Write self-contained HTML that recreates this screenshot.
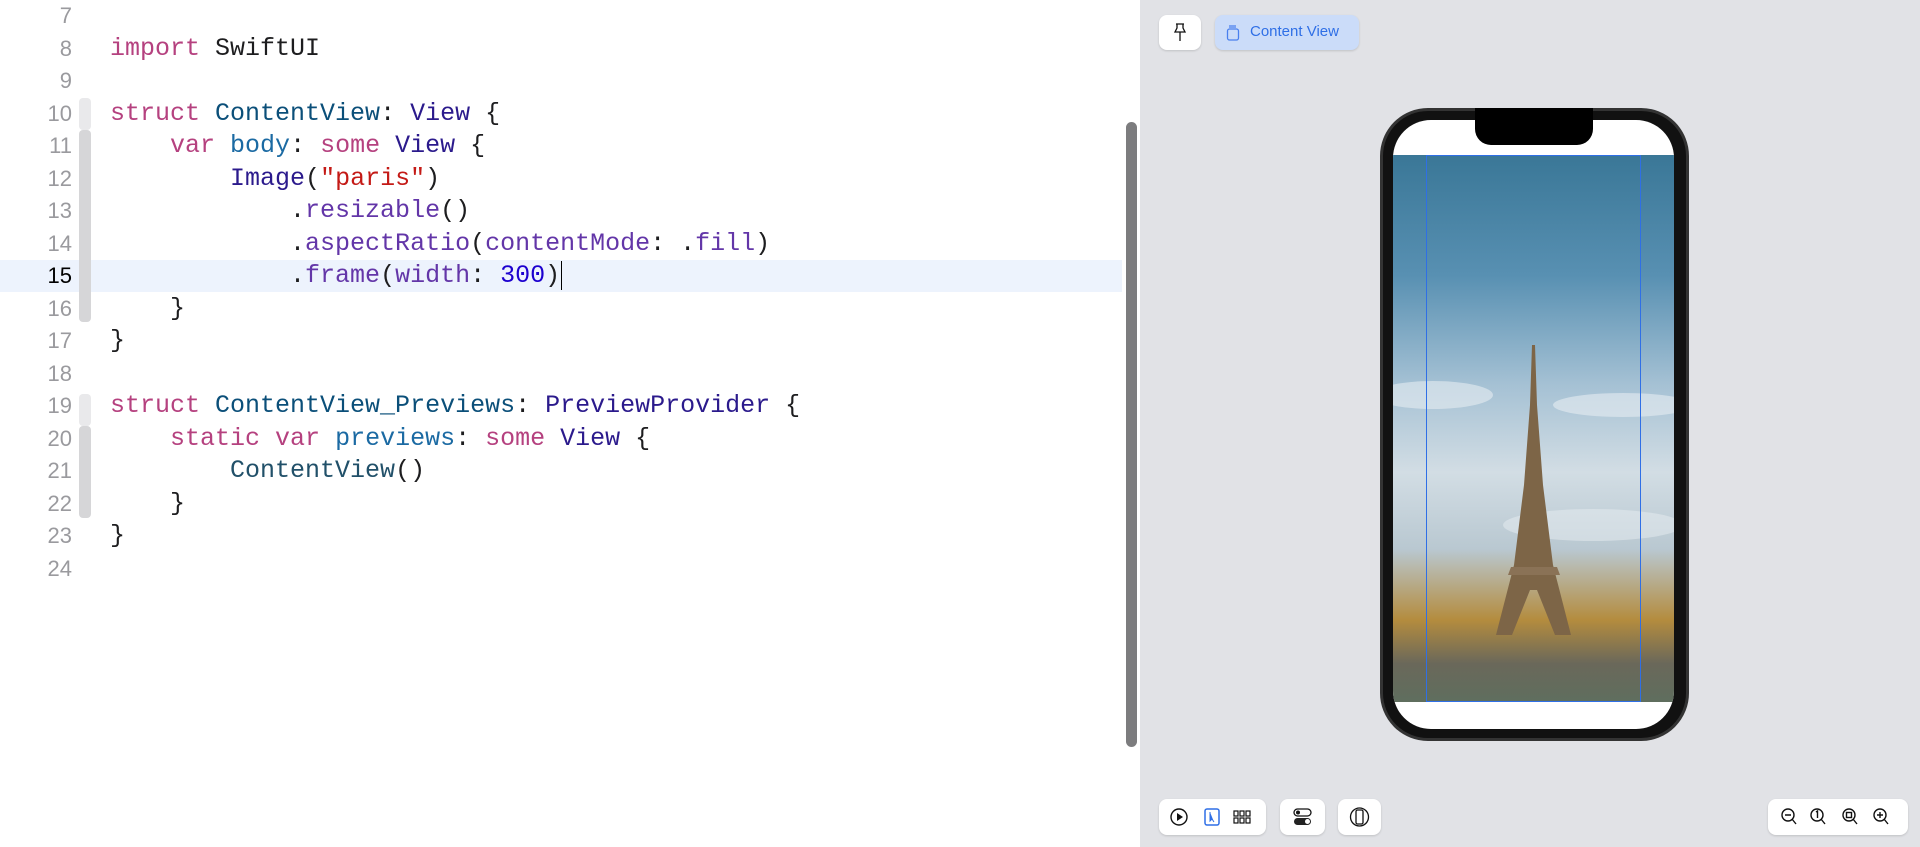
<!DOCTYPE html>
<html><head><meta charset="utf-8"><style>
*{margin:0;padding:0;box-sizing:border-box}
body{width:1920px;height:847px;overflow:hidden;background:#fff;position:relative;font-family:"Liberation Sans",sans-serif}
#ed{position:absolute;left:0;top:0;width:1139px;height:847px;background:#fff}
.hl{position:absolute;left:0;top:260px;width:1122px;height:32px;background:#edf3fd}
.ln{position:absolute;left:0;width:72px;text-align:right;font-family:"Liberation Sans",sans-serif;font-size:22px;color:#9a9a9e;line-height:32.5px}
.cd{position:absolute;left:110px;font-family:"Liberation Mono",monospace;font-size:25px;line-height:32.5px;white-space:pre;color:#1d1d1f}
.k{color:#b5417f}.t{color:#0b4f79}.v{color:#2b1a8c}.m{color:#6336a8}.s{color:#c41a16}.n{color:#1c00cf}.p{color:#1b6aa3}.c{color:#215069}
.fold{position:absolute;left:79px;width:12px;background:#d6d6d8;border-radius:4px}
#sb{position:absolute;left:1126px;top:122px;width:11px;height:625px;background:#7c7c7e;border-radius:6px}
#pv{position:absolute;left:1140px;top:0;width:780px;height:847px;background:#e1e2e6}
.btn{position:absolute;background:#fff;border-radius:8px;box-shadow:0 1px 2px rgba(0,0,0,.15)}
</style></head><body>
<div id="ed">
<div class="hl"></div>
<div class="fold" style="top:98px;height:32px;background:#e9e9eb"></div>
<div class="fold" style="top:130px;height:192px"></div>
<div class="fold" style="top:394px;height:32px;background:#e9e9eb"></div>
<div class="fold" style="top:426px;height:92px"></div>
<div class="ln" style="top:0">7</div>
<div class="ln" style="top:32.5px">8</div>
<div class="ln" style="top:65px">9</div>
<div class="ln" style="top:97.5px">10</div>
<div class="ln" style="top:130px">11</div>
<div class="ln" style="top:162.5px">12</div>
<div class="ln" style="top:195px">13</div>
<div class="ln" style="top:227.5px">14</div>
<div class="ln" style="top:260px;color:#000">15</div>
<div class="ln" style="top:292.5px">16</div>
<div class="ln" style="top:325px">17</div>
<div class="ln" style="top:357.5px">18</div>
<div class="ln" style="top:390px">19</div>
<div class="ln" style="top:422.5px">20</div>
<div class="ln" style="top:455px">21</div>
<div class="ln" style="top:487.5px">22</div>
<div class="ln" style="top:520px">23</div>
<div class="ln" style="top:552.5px">24</div>
<div class="cd" style="top:32.5px"><span class="k">import</span> SwiftUI</div>
<div class="cd" style="top:97.5px"><span class="k">struct</span> <span class="t">ContentView</span>: <span class="v">View</span> {</div>
<div class="cd" style="top:130px">    <span class="k">var</span> <span class="p">body</span>: <span class="k">some</span> <span class="v">View</span> {</div>
<div class="cd" style="top:162.5px">        <span class="v">Image</span>(<span class="s">"paris"</span>)</div>
<div class="cd" style="top:195px">            .<span class="m">resizable</span>()</div>
<div class="cd" style="top:227.5px">            .<span class="m">aspectRatio</span>(<span class="m">contentMode</span>: .<span class="m">fill</span>)</div>
<div class="cd" style="top:260px">            .<span class="m">frame</span>(<span class="m">width</span>: <span class="n">300</span>)<span style="border-left:1.5px solid #000;margin-left:1px"></span></div>
<div class="cd" style="top:292.5px">    }</div>
<div class="cd" style="top:325px">}</div>
<div class="cd" style="top:390px"><span class="k">struct</span> <span class="t">ContentView_Previews</span>: <span class="v">PreviewProvider</span> {</div>
<div class="cd" style="top:422.5px">    <span class="k">static</span> <span class="k">var</span> <span class="p">previews</span>: <span class="k">some</span> <span class="v">View</span> {</div>
<div class="cd" style="top:455px">        <span class="c">ContentView</span>()</div>
<div class="cd" style="top:487.5px">    }</div>
<div class="cd" style="top:520px">}</div>
<div id="sb"></div>
</div>
<div id="pv">
<div class="btn" style="left:19px;top:15px;width:42px;height:35px">
<svg width="42" height="35" viewBox="0 0 42 35"><g fill="none" stroke="#111" stroke-width="1.3"><path d="M17 9h8M18 9v4l-2 4h10l-2-4V9M21 17v9"/></g></svg></div>
<div class="btn" style="left:75px;top:15px;width:144px;height:35px;background:#cbdcf9">
<svg style="position:absolute;left:11px;top:9px" width="14" height="18" viewBox="0 0 14 18"><rect x="3" y="1" width="7" height="3" fill="#7aa2f2"/><rect x="1.5" y="5" width="11" height="11" rx="2" fill="none" stroke="#4a80ee" stroke-width="1.3"/></svg>
<span style="position:absolute;left:35px;top:8px;font-size:15px;color:#2f6fe6">Content View</span></div>
<div style="position:absolute;left:240px;top:108px;width:309px;height:633px;background:#111;border-radius:48px;border:3px solid #333"></div>
<div style="position:absolute;left:253px;top:120px;width:281px;height:609px;background:#fff;border-radius:38px;overflow:hidden">
<div style="position:absolute;left:0;top:35px;width:281px;height:547px;background:linear-gradient(#3a7797 0%,#5890b2 22%,#a5c1d4 42%,#d2dde4 58%,#b9c8d1 72%,#b48c3e 85%,#6a685a 93%,#5f6e5e 100%)">
<svg width="281" height="547" viewBox="0 0 281 547"><ellipse cx="40" cy="240" rx="60" ry="14" fill="#e6edf2" opacity=".6"/><ellipse cx="230" cy="250" rx="70" ry="12" fill="#e6edf2" opacity=".6"/><ellipse cx="200" cy="370" rx="90" ry="16" fill="#e8eef2" opacity=".5"/><g fill="#7d6547"><path d="M139 190h3l2 60 6 80 10 80 18 70h-16l-18-45h-7l-18 45h-16l18-70 10-80 6-80z"/></g><path d="M118 412h46l3 8h-52z" fill="#8a7256"/></svg>
</div>
<div style="position:absolute;left:33px;top:35px;width:215px;height:547px;border:1px solid #2f6fe6"></div>
</div>
<div style="position:absolute;left:335px;top:108px;width:118px;height:37px;background:#000;border-radius:0 0 16px 16px"></div>
<div class="btn" style="left:19px;top:799px;width:107px;height:36px">
<svg width="107" height="36" viewBox="0 0 107 36"><circle cx="20" cy="18" r="8" fill="none" stroke="#111" stroke-width="1.4"/><path d="M18 14v8l6-4z" fill="#111"/><rect x="46" y="10" width="14" height="16" rx="2" fill="none" stroke="#2f6fe6" stroke-width="1.5"/><path d="M51 13v9l2-2 2 3" fill="#2f6fe6" stroke="#2f6fe6" stroke-width="1"/><g fill="none" stroke="#111" stroke-width="1.2"><rect x="75" y="12" width="4" height="5"/><rect x="81" y="12" width="4" height="5"/><rect x="87" y="12" width="4" height="5"/><rect x="75" y="19" width="4" height="5"/><rect x="81" y="19" width="4" height="5"/><rect x="87" y="19" width="4" height="5"/></g></svg></div>
<div class="btn" style="left:140px;top:799px;width:45px;height:36px">
<svg width="45" height="36" viewBox="0 0 45 36"><rect x="14" y="10" width="17" height="7" rx="3.5" fill="none" stroke="#111" stroke-width="1.3"/><circle cx="18" cy="13.5" r="2" fill="#111"/><rect x="14" y="19" width="17" height="7" rx="3.5" fill="#222"/><circle cx="27.5" cy="22.5" r="2.5" fill="#fff"/></svg></div>
<div class="btn" style="left:198px;top:799px;width:43px;height:36px">
<svg width="43" height="36" viewBox="0 0 43 36"><circle cx="21.5" cy="18" r="9" fill="none" stroke="#111" stroke-width="1.3"/><rect x="18" y="11" width="7" height="14" rx="1.5" fill="none" stroke="#111" stroke-width="1.3"/></svg></div>
<div class="btn" style="left:628px;top:799px;width:140px;height:36px">
<svg width="140" height="36" viewBox="0 0 140 36"><g fill="none" stroke="#111" stroke-width="1.4"><circle cx="20" cy="16" r="6"/><path d="M24 20l4 5M17 16h6"/><circle cx="49" cy="16" r="6"/><path d="M53 20l4 5M48 13l1.5-1v7"/><circle cx="81" cy="16" r="6"/><path d="M85 20l4 5"/><rect x="78.5" y="13.5" width="5" height="5"/><circle cx="112" cy="16" r="6"/><path d="M116 20l4 5M109 16h6M112 13v6"/></g></svg></div>
</div>
</body></html>
